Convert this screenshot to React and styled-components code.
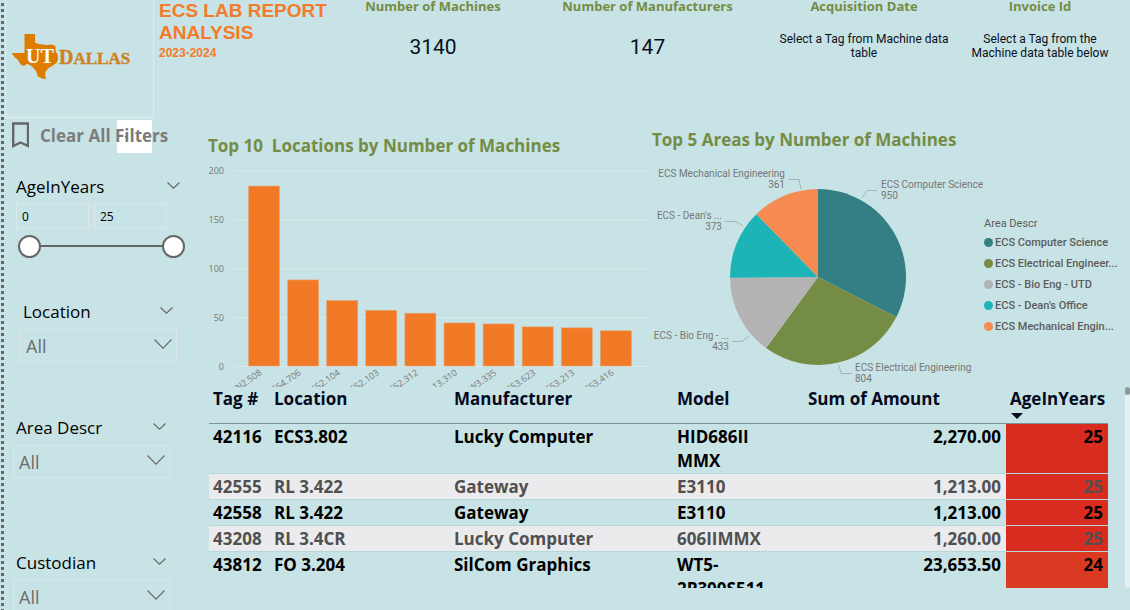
import React, { useState } from "react";
import styled, { createGlobalStyle } from "styled-components";

const ui = '"Open Sans", "Noto Sans", sans-serif';
const din = 'Roboto, "Liberation Sans", sans-serif';

const GlobalStyle = createGlobalStyle`
  *, *::before, *::after { box-sizing: border-box; }
  html { scrollbar-width: none; }
  body { margin: 0; background: #c8e3e5; font-family: ${ui}; color: #000; }
  button, input, select { font: inherit; color: inherit; }
  h1, h2, p, ul { margin: 0; padding: 0; }
`;

const Page = styled.div`
  display: flex;
  min-height: 100vh;
  padding-left: 1px;
  background: #c8e3e5;
`;

const DottedEdge = styled.div`
  flex: none;
  width: 3px;
  margin-right: 1px;
  background: repeating-linear-gradient(#c8e3e5 0 3px, #666 3px 6px);
`;

const Report = styled.div`
  flex: 1;
  min-width: 0;
`;

const Header = styled.header`
  display: flex;
  height: 118px;
`;

const LogoBox = styled.div`
  flex: none;
  width: 149px;
  border-right: 1px solid #e3ebec;
  border-bottom: 1px solid #e3ebec;
  border-left: 1px solid #dbe9ea;
`;

const TitleBlock = styled.div`
  flex: none;
  width: 177px;
  padding-left: 5px;
  font-family: "Liberation Sans", Arial, sans-serif;
  font-weight: 700;
  color: #f47b29;
  white-space: nowrap;
`;

const Title = styled.h1`
  font-size: 19px;
  line-height: 22px;
`;

const Period = styled.p`
  font-size: 12px;
  line-height: 18px;
`;

const Kpis = styled.section`
  flex: 1;
  display: grid;
  grid-template-columns: 204fr 225fr 208fr 144fr;
  align-content: start;
  padding-right: 18px;
  text-align: center;
`;

const KpiLabel = styled.h2`
  font-size: 13px;
  font-weight: 700;
  line-height: 12px;
  color: #758c44;
  white-space: nowrap;
`;

const KpiValue = styled.p`
  margin-top: ${(p) => (p.$note ? 20 : 23)}px;
  font-family: ${din};
  font-size: ${(p) => (p.$note ? 12 : 21)}px;
  line-height: ${(p) => (p.$note ? 14 : 24)}px;
  color: #0a1022;
`;

const Body = styled.div`
  display: flex;
`;

const Sidebar = styled.aside`
  flex: none;
  width: 203px;
  padding: 2px 0 0 7px;
`;

const ClearRow = styled.div`
  position: relative;
  height: 56px;
`;

const ClearButton = styled.button`
  position: relative;
  z-index: 1;
  display: flex;
  align-items: center;
  gap: 11px;
  height: 30px;
  padding: 0;
  border: 0;
  background: none;
  font-size: 17px;
  font-weight: 700;
  color: #7c7c7c;
  white-space: nowrap;
`;

const MarkerBox = styled.span`
  position: absolute;
  top: 0;
  left: 105px;
  display: flex;
  align-items: center;
  gap: 4px;
  width: 35px;
  height: 33px;
  padding-left: 8px;
  background: #fff;
  i {
    width: 2px;
    height: 2px;
    background: #777;
  }
`;

const Slicer = styled.section`
  width: 157px;
  margin-left: ${(p) => (p.$indent ? 8 : 1)}px;
  height: ${(p) => p.$height}px;
`;

const SlicerHead = styled.div`
  display: flex;
  align-items: center;
  justify-content: space-between;
  height: 22px;
  margin-bottom: 6px;
  padding: 0 4px 0 3px;
  font-size: 17px;
  line-height: 22px;
`;

const AgeSlicer = styled.section`
  width: 172px;
  height: 125px;
  padding-left: 4px;
`;

const AgeHead = styled(SlicerHead)`
  padding: 0 4px 0 0;
  margin-bottom: 5px;
`;

const CollapseButton = styled.button`
  display: flex;
  padding: 0 0 4px;
  border: 0;
  background: none;
  color: #666;
`;

const AgeInputs = styled.div`
  display: flex;
  gap: 5px;
`;

const AgeInput = styled.input`
  width: 73px;
  height: 26px;
  padding: 0 5px;
  border: 1px solid #dbe7e9;
  background: transparent;
  font-size: 12px;
`;

const RangeGroup = styled.div`
  position: relative;
  height: 24px;
  margin: 5px 0 0 2px;
  width: 167px;
  background: linear-gradient(#666, #666) center / 144px 2px no-repeat;
`;

const Range = styled.input`
  position: absolute;
  inset: 0;
  width: 100%;
  height: 24px;
  margin: 0;
  appearance: none;
  background: none;
  pointer-events: none;
  &::-webkit-slider-thumb {
    appearance: none;
    pointer-events: auto;
    width: 23px;
    height: 23px;
    border: 2px solid #666;
    border-radius: 50%;
    background: #fff;
  }
`;

const SelectWrap = styled.div`
  position: relative;
  color: #666;
  svg {
    position: absolute;
    right: 5px;
    top: 10px;
    pointer-events: none;
  }
`;

const Select = styled.select`
  appearance: none;
  width: 100%;
  height: 33px;
  padding: 0 5px;
  border: 1px solid #dbe7e9;
  border-radius: 0;
  background: transparent;
  font-size: 18px;
  color: #6c6c6c;
`;

const Main = styled.main`
  flex: 1;
  min-width: 0;
  padding-top: 10px;
`;

const Charts = styled.div`
  display: grid;
  grid-template-columns: 444fr 478fr;
  align-items: end;
`;

const Panel = styled.section`
  min-width: 0;
  svg { display: block; width: 100%; height: auto; }
`;

const PanelTitle = styled.h2`
  font-size: 17px;
  font-weight: 700;
  line-height: 24px;
  color: #758c44;
  white-space: pre;
`;

const AxisText = styled.text`
  font-family: ${ui};
  font-size: 9px;
  fill: #777;
`;

const PieText = styled.text`
  font-family: ${din};
  font-size: 10px;
  fill: #777;
`;

const PieLayout = styled.div`
  display: flex;
  align-items: flex-start;
`;

const PieDrawing = styled.div`
  flex: 1;
  min-width: 0;
`;

const Legend = styled.div`
  flex: none;
  width: 146px;
  padding-top: 64px;
  font-family: ${din};
  font-size: 11px;
  color: #5c5c5c;
`;

const LegendTitle = styled.p`
  line-height: 16px;
`;

const LegendItem = styled.li`
  display: flex;
  align-items: center;
  gap: 2px;
  height: 21px;
  font-weight: 500;
  white-space: nowrap;
  &::before {
    content: "";
    width: 9px;
    height: 9px;
    border-radius: 50%;
    background: ${(p) => p.$color};
  }
`;

const TableArea = styled.div`
  display: flex;
  gap: 17px;
  max-height: 201px;
  padding-left: 1px;
  overflow: hidden;
`;

const Table = styled.table`
  flex: 1;
  width: 100%;
  min-width: 0;
  table-layout: fixed;
  border-collapse: separate;
  border-spacing: 0;
  font-size: 17px;
  font-weight: 700;
  line-height: 24px;
`;

const Th = styled.th`
  position: relative;
  height: 37px;
  padding: 0 5px 0 4px;
  border-bottom: 1px solid #769496;
  vertical-align: top;
  text-align: ${(p) => (p.$right ? "right" : "left")};
  font-weight: 700;
  color: #050a20;
  white-space: nowrap;
`;

const SortMark = styled.svg`
  position: absolute;
  left: 5px;
  bottom: 4px;
`;

const Td = styled.td`
  padding: 1px ${(p) => (p.$narrow ? 20 : 5)}px 0 4px;
  border-bottom: 1px solid #b4d9dc;
  vertical-align: top;
  text-align: ${(p) => (p.$right ? "right" : "left")};
  background: ${(p) => p.$fill || "transparent"};
`;

const Tr = styled.tr`
  background: ${(p) => (p.$band ? "#ebebed" : "transparent")};
  color: ${(p) => (p.$band ? "#505050" : "#000")};
`;

const ScrollTrack = styled.div`
  flex: none;
  width: 5px;
  border-radius: 3px;
  background: #e3f1f2;
  &::before {
    content: "";
    display: block;
    height: 8px;
    border-radius: 4px;
    background: #8f9899;
  }
`;

const Chevron = ({ w = 13, h = 7 }) => (
  <svg width={w} height={h} viewBox={`0 0 ${w} ${h}`} fill="none" aria-hidden="true">
    <path d={`M.5 .5 L${w / 2} ${h - 0.8} L${w - 0.5} .5`} stroke="#666" strokeWidth="1.1" />
  </svg>
);

const Logo = () => (
  <svg width="147" height="117" viewBox="6 0 147 117" role="img" aria-label="UT Dallas">
    <path
      fill="#de7c00"
      d="M24.500 34H35V42.500L39 44L43 44.500L47 45L52 44.500L55.500 46V51L57.500 54L58 59L56.500 63L52 66L48 68.500L45.500 72L45 75L46 79L42 78.500L38 76.500L36 71L32.500 67L29 64.500L26.500 64L24 66L20.500 64.500L18 60L14.500 57L11.500 53H24.500Z"
    />
    <text x="26" y="63" fontFamily="Liberation Serif, serif" fontWeight="700" fontSize="20" fill="#fff">UT</text>
    <text x="59" y="64" fontFamily="Liberation Serif, serif" fontWeight="700" fontSize="20" fill="#cf8122" stroke="#cf8122" strokeWidth="0.4">
      D<tspan fontSize="17">ALLAS</tspan>
    </text>
  </svg>
);

const locations = [
  ["ECSN2.508", 184], ["ECS4.706", 88], ["ECS2.104", 67], ["ECS2.103", 57], ["ECS2.312", 54],
  ["RL13.310", 44], ["ECSW3.335", 43], ["ECS3.623", 40], ["ECS3.213", 39], ["ECS3.416", 36],
];

const BarChart = () => (
  <svg viewBox="208 158 444 229" role="img" aria-label="Machines in each location">
    {[0, 50, 100, 150, 200].map((v) => (
      <g key={v}>
        <line x1="233" x2="648" y1={366.5 - v * 0.978} y2={366.5 - v * 0.978} stroke="#dde8ea" />
        <AxisText x="224" y={370 - v * 0.978} textAnchor="end">{v}</AxisText>
      </g>
    ))}
    {locations.map(([name, v], i) => {
      const x = 248.5 + i * 39.1;
      return (
        <g key={name}>
          <rect x={x} y={366 - v * 0.978} width="31" height={v * 0.978} fill="#f27925" stroke="#e3a577" strokeWidth="0.6" />
          <AxisText x={x + 14} y="374" textAnchor="end" transform={`rotate(-35 ${x + 14} 374)`}>{name}</AxisText>
        </g>
      );
    })}
  </svg>
);

const areas = [
  { name: "ECS Computer Science", legend: "ECS Computer Science", n: 950, color: "#347f83", x: 881, y: 188, line: "862,198 867,190.5 877,190.5" },
  { name: "ECS Electrical Engineering", legend: "ECS Electrical Engineer...", n: 804, color: "#758c44", x: 855, y: 371, line: "839,365 841,373.5 852,373.5" },
  { name: "ECS - Bio Eng - ...", legend: "ECS - Bio Eng - UTD", n: 433, color: "#b3b3b3", x: 729, y: 339, end: true, line: "749,336 742,341.5 732,341.5" },
  { name: "ECS - Dean's ...", legend: "ECS - Dean's Office", n: 373, color: "#1cb4b6", x: 722, y: 219, end: true, line: "743,226 736,221.5 725,221.5" },
  { name: "ECS Mechanical Engineering", legend: "ECS Mechanical Engin...", n: 361, color: "#f68b52", x: 785, y: 177, end: true, line: "801,189 799,179.5 788,179.5" },
];

const PieChart = () => {
  const total = areas.reduce((s, a) => s + a.n, 0);
  const point = (t) => `${818 + 88 * Math.sin(t)} ${277 - 88 * Math.cos(t)}`;
  let from = 0;
  return (
    <svg viewBox="652 152 332 235" role="img" aria-label="Share of machines in each area">
      {areas.map((a) => {
        const to = from + (a.n / total) * Math.PI * 2;
        const d = `M818 277 L${point(from)} A88 88 0 0 1 ${point(to)} Z`;
        from = to;
        const anchor = a.end ? "end" : "start";
        return (
          <g key={a.name}>
            <path d={d} fill={a.color} />
            <polyline points={a.line} fill="none" stroke="#a3b6b8" />
            <PieText x={a.x} y={a.y} textAnchor={anchor}>{a.name}</PieText>
            <PieText x={a.x} y={a.y + 11} textAnchor={anchor}>{a.n}</PieText>
          </g>
        );
      })}
    </svg>
  );
};

const rows = [
  ["42116", "ECS3.802", "Lucky Computer", "HID686II MMX", "2,270.00", "25"],
  ["42555", "RL 3.422", "Gateway", "E3110", "1,213.00", "25"],
  ["42558", "RL 3.422", "Gateway", "E3110", "1,213.00", "25"],
  ["43208", "RL 3.4CR", "Lucky Computer", "606IIMMX", "1,260.00", "25"],
  ["43812", "FO 3.204", "SilCom Graphics", "WT5-2P300S511", "23,653.50", "24"],
];

const DropdownSlicer = ({ id, label, indent, height }) => (
  <Slicer $indent={indent} $height={height}>
    <SlicerHead>
      <label htmlFor={id}>{label}</label>
      <CollapseButton aria-label={`Collapse ${label}`}><Chevron /></CollapseButton>
    </SlicerHead>
    <SelectWrap>
      <Select id={id}><option>All</option></Select>
      <Chevron w={18} h={10} />
    </SelectWrap>
  </Slicer>
);

export default function App() {
  const [low, setLow] = useState(0);
  const [high, setHigh] = useState(25);
  return (
    <>
      <GlobalStyle />
      <Page>
        <DottedEdge />
        <Report>
          <Header>
            <LogoBox><Logo /></LogoBox>
            <TitleBlock>
              <Title>ECS LAB REPORT<br />ANALYSIS</Title>
              <Period>2023-2024</Period>
            </TitleBlock>
            <Kpis>
              <div><KpiLabel>Number of Machines</KpiLabel><KpiValue>3140</KpiValue></div>
              <div><KpiLabel>Number of Manufacturers</KpiLabel><KpiValue>147</KpiValue></div>
              <div><KpiLabel>Acquisition Date</KpiLabel><KpiValue $note>Select a Tag from Machine data<br />table</KpiValue></div>
              <div><KpiLabel>Invoice Id</KpiLabel><KpiValue $note>Select a Tag from the<br />Machine data table below</KpiValue></div>
            </Kpis>
          </Header>
          <Body>
            <Sidebar>
              <ClearRow>
                <MarkerBox><i /><i /><i /></MarkerBox>
                <ClearButton>
                  <svg width="17" height="26" viewBox="0 0 17 26" fill="none" aria-hidden="true">
                    <path d="M1.200 1.500H16V24L8.500 20.500L1.200 24Z" stroke="#666" strokeWidth="2.400" />
                  </svg>
                  Clear All Filters
                </ClearButton>
              </ClearRow>
              <AgeSlicer>
                <AgeHead>
                  <label htmlFor="age-low">AgeInYears</label>
                  <CollapseButton aria-label="Collapse AgeInYears"><Chevron /></CollapseButton>
                </AgeHead>
                <AgeInputs>
                  <AgeInput id="age-low" value={low} onChange={(e) => setLow(e.target.value)} />
                  <AgeInput aria-label="Highest age" value={high} onChange={(e) => setHigh(e.target.value)} />
                </AgeInputs>
                <RangeGroup>
                  <Range type="range" min="0" max="25" value={low} aria-label="Lowest age" onChange={(e) => setLow(e.target.value)} />
                  <Range type="range" min="0" max="25" value={high} aria-label="Highest age" onChange={(e) => setHigh(e.target.value)} />
                </RangeGroup>
              </AgeSlicer>
              <DropdownSlicer id="location" label="Location" indent height={116} />
              <DropdownSlicer id="area" label="Area Descr" height={135} />
              <DropdownSlicer id="custodian" label="Custodian" height={60} />
            </Sidebar>
            <Main>
              <Charts>
                <Panel>
                  <PanelTitle>{"Top 10  Locations by Number of Machines"}</PanelTitle>
                  <BarChart />
                </Panel>
                <Panel>
                  <PanelTitle>Top 5 Areas by Number of Machines</PanelTitle>
                  <PieLayout>
                    <PieDrawing><PieChart /></PieDrawing>
                    <Legend>
                      <LegendTitle>Area Descr</LegendTitle>
                      <ul>
                        {areas.map((a) => <LegendItem key={a.name} $color={a.color}>{a.legend}</LegendItem>)}
                      </ul>
                    </Legend>
                  </PieLayout>
                </Panel>
              </Charts>
              <TableArea>
                <Table>
                  <colgroup>
                    {[61, 180, 223, 131, 202, 102].map((w, i) => <col key={i} width={w} />)}
                  </colgroup>
                  <thead>
                    <tr>
                      <Th>Tag #</Th>
                      <Th>Location</Th>
                      <Th>Manufacturer</Th>
                      <Th>Model</Th>
                      <Th>Sum of Amount</Th>
                      <Th $right>
                        AgeInYears
                        <SortMark width="12" height="6" viewBox="0 0 12 6" aria-hidden="true">
                          <path d="M0 0H12L6 6Z" fill="#050a20" />
                        </SortMark>
                      </Th>
                    </tr>
                  </thead>
                  <tbody>
                    {rows.map((r, i) => (
                      <Tr key={r[0]} $band={i % 2 === 1}>
                        {r.map((c, j) => (
                          <Td key={j} $narrow={j === 3} $right={j > 3} $fill={j === 5 ? (c === "25" ? "#d82c20" : "#da3a22") : undefined}>{c}</Td>
                        ))}
                      </Tr>
                    ))}
                  </tbody>
                </Table>
                <ScrollTrack />
              </TableArea>
            </Main>
          </Body>
        </Report>
      </Page>
    </>
  );
}
